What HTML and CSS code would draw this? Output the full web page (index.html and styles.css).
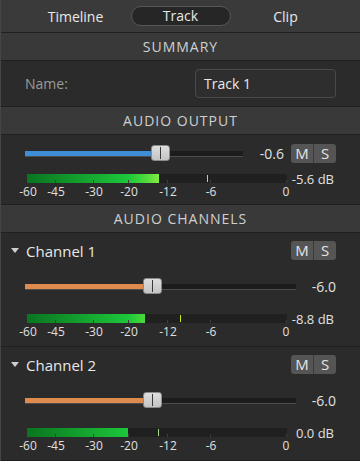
FILE: index.html
```html
<!DOCTYPE html>
<html lang="en">
<head>
    <meta charset="UTF-8">
    <meta name="viewport" content="width=device-width, initial-scale=1.0">
    <title>Track Properties</title>
    <link rel="stylesheet" href="styles.css">
</head>
<body>
    <div class="panel">
        <div class="tabs">
            <div class="tab">Timeline</div>
            <div class="tab"><span class="pill">Track</span></div>
            <div class="tab">Clip</div>
        </div>

        <div class="section-title">SUMMARY</div>
        <div class="name-row">
            <span class="label">Name:</span>
            <div class="name-input">Track 1</div>
        </div>

        <div class="section-title">AUDIO OUTPUT</div>
        <div class="output">
            <div class="slider-row">
                <div class="slider output-slider">
                    <div class="fill blue" style="width: 130px"></div>
                    <div class="thumb" style="left: 126px"></div>
                </div>
                <span class="value small-gap">-0.6</span>
                <div class="ms"><span>M</span><span>S</span></div>
            </div>
            <div class="meter-row">
                <div class="meter">
                    <div class="level" style="width: 132px"></div>
                    <i class="tick" style="left: 28px"></i>
                    <i class="tick" style="left: 66px"></i>
                    <i class="tick" style="left: 101px"></i>
                    <i class="tick" style="left: 140px"></i>
                    <i class="tick" style="left: 183px"></i>
                    <i class="tick" style="left: 259px"></i>
                    <i class="peak yellow" style="left: 180px"></i>
                </div>
                <span class="db">-5.6 dB</span>
            </div>
            <div class="scale">
                <span style="left: 1px">-60</span>
                <span style="left: 29px">-45</span>
                <span style="left: 67px">-30</span>
                <span style="left: 102px">-20</span>
                <span style="left: 141px">-12</span>
                <span style="left: 184px">-6</span>
                <span style="left: 259px">0</span>
            </div>
        </div>

        <div class="section-title">AUDIO CHANNELS</div>
        <div class="channel">
            <div class="channel-head">
                <span class="arrow"></span>
                <span class="channel-name">Channel 1</span>
                <div class="ms"><span>M</span><span>S</span></div>
            </div>
            <div class="slider-row">
                <div class="slider channel-slider">
                    <div class="fill orange" style="width: 122px"></div>
                    <div class="thumb" style="left: 118px"></div>
                </div>
                <span class="value">-6.0</span>
            </div>
            <div class="meter-row">
                <div class="meter">
                    <div class="level" style="width: 118px"></div>
                    <i class="tick" style="left: 28px"></i>
                    <i class="tick" style="left: 66px"></i>
                    <i class="tick" style="left: 101px"></i>
                    <i class="tick" style="left: 140px"></i>
                    <i class="tick" style="left: 183px"></i>
                    <i class="tick" style="left: 259px"></i>
                    <i class="peak lime" style="left: 153px"></i>
                </div>
                <span class="db">-8.8 dB</span>
            </div>
            <div class="scale">
                <span style="left: 1px">-60</span>
                <span style="left: 29px">-45</span>
                <span style="left: 67px">-30</span>
                <span style="left: 102px">-20</span>
                <span style="left: 141px">-12</span>
                <span style="left: 184px">-6</span>
                <span style="left: 259px">0</span>
            </div>
        </div>

        <div class="channel">
            <div class="channel-head">
                <span class="arrow"></span>
                <span class="channel-name">Channel 2</span>
                <div class="ms"><span>M</span><span>S</span></div>
            </div>
            <div class="slider-row">
                <div class="slider channel-slider">
                    <div class="fill orange" style="width: 122px"></div>
                    <div class="thumb" style="left: 118px"></div>
                </div>
                <span class="value">-6.0</span>
            </div>
            <div class="meter-row">
                <div class="meter">
                    <div class="level" style="width: 101px"></div>
                    <i class="tick" style="left: 28px"></i>
                    <i class="tick" style="left: 66px"></i>
                    <i class="tick" style="left: 101px"></i>
                    <i class="tick" style="left: 140px"></i>
                    <i class="tick" style="left: 183px"></i>
                    <i class="tick" style="left: 259px"></i>
                    <i class="peak pale" style="left: 131px"></i>
                </div>
                <span class="db">0.0 dB</span>
            </div>
            <div class="scale">
                <span style="left: 1px">-60</span>
                <span style="left: 29px">-45</span>
                <span style="left: 67px">-30</span>
                <span style="left: 102px">-20</span>
                <span style="left: 141px">-12</span>
                <span style="left: 184px">-6</span>
                <span style="left: 259px">0</span>
            </div>
        </div>
    </div>
</body>
</html>
```

FILE: styles.css
```css
body {
    margin: 0;
    background: #2b2b2b;
    font-family: 'Open Sans', 'Noto Sans', sans-serif;
    color: #dcdcdc;
    overflow: hidden;
}

.panel {
    width: 359px;
    height: 461px;
    border-left: 1px solid #454545;
    background: #2b2b2b;
}

/* top switcher */
.tabs {
    display: flex;
    height: 33px;
    padding: 0 22px;
    background: #3a3a3a;
    border-bottom: 1px solid #1f1f1f;
    box-sizing: border-box;
}

.tab {
    flex: 1;
    display: flex;
    align-items: center;
    justify-content: center;
    font-size: 14px;
    color: #e8e8e8;
}

.pill {
    width: 100px;
    height: 20px;
    line-height: 18px;
    text-align: center;
    box-sizing: border-box;
    border: 1px solid #575757;
    border-radius: 10px;
    background: #262626;
}

.section-title {
    height: 27px;
    line-height: 27px;
    text-align: center;
    font-size: 14px;
    letter-spacing: 1px;
    color: #d0d0d0;
    background: #393939;
    border-bottom: 1px solid #1f1f1f;
}

.name-row {
    display: flex;
    align-items: center;
    justify-content: space-between;
    height: 45px;
    padding: 0 24px 0 24px;
    border-bottom: 1px solid #1f1f1f;
}

.label {
    font-size: 14px;
    color: #9a9a9a;
}

.name-input {
    width: 141px;
    height: 29px;
    line-height: 27px;
    box-sizing: border-box;
    padding-left: 8px;
    font-size: 14px;
    color: #e8e8e8;
    border: 1px solid #4a4a4a;
    border-radius: 4px;
    background: #2e2e2e;
}

/* sliders */
.output {
    height: 70px;
    padding-top: 9px;
    box-sizing: border-box;
    border-bottom: 1px solid #1f1f1f;
}

.channel {
    height: 114px;
    padding-top: 8px;
    box-sizing: border-box;
    border-bottom: 1px solid #1f1f1f;
}

.slider-row {
    display: flex;
    align-items: center;
    height: 19px;
    padding: 0 24px;
}

.slider {
    position: relative;
    height: 5px;
    background: #1c1c1c;
    border-bottom: 1px solid #4d4d4d;
}

.output-slider { width: 218px; }
.channel-slider { width: 271px; }

.fill {
    height: 5px;
}

.blue { background: #3d8ed6; }
.orange { background: #df8a4e; }

.thumb {
    position: absolute;
    top: -6px;
    width: 19px;
    height: 16px;
    box-sizing: border-box;
    border-radius: 3px;
    background: linear-gradient(#dedede, #c4c4c4);
    border: 1px solid #8a8a8a;
}

.thumb::after {
    content: "";
    position: absolute;
    left: 8px;
    top: 1px;
    width: 1px;
    height: 12px;
    background: #3a3a3a;
}

.value {
    margin-left: auto;
    font-size: 14px;
    color: #e0e0e0;
}

.small-gap {
    margin-right: 7px;
}

.ms {
    display: flex;
    height: 19px;
    border-radius: 3px;
    overflow: hidden;
    background: #555;
}

.ms span {
    width: 22px;
    text-align: center;
    line-height: 19px;
    font-size: 15px;
    color: #e4e4e4;
}

.ms span + span {
    border-left: 1px solid #3a3a3a;
}

/* meters */
.meter-row {
    display: flex;
    align-items: center;
    margin-top: 11px;
    padding: 0 26px 0 26px;
    height: 9px;
}

.channel .meter-row { margin-top: 18px; }

.meter {
    position: relative;
    width: 260px;
    height: 9px;
    background: #202020;
}

.level {
    height: 9px;
    background: linear-gradient(to right, #0a7420, #1cc83a 39%, #48d83a 45%, #85ec42 51%, #d0f040);
    background-size: 260px 100%;
}

.tick {
    position: absolute;
    bottom: 0;
    width: 1px;
    height: 3px;
    background: #3d3d3d;
}

.peak {
    position: absolute;
    top: 1px;
    width: 1px;
    height: 7px;
}

.yellow { background: #e8d400; }
.lime { background: #c9e81c; }
.pale { background: #a8d890; }

.db {
    margin-left: auto;
    font-size: 13px;
    color: #e0e0e0;
}

.scale {
    position: relative;
    height: 17px;
    margin-left: 26px;
    font-size: 12px;
    color: #e0e0e0;
}

.scale span {
    position: absolute;
    top: 0;
    transform: translateX(-50%);
}

.channel-head {
    display: flex;
    align-items: center;
    height: 19px;
    padding: 0 24px 0 10px;
}

.arrow {
    width: 0;
    height: 0;
    border-left: 4px solid transparent;
    border-right: 4px solid transparent;
    border-top: 5px solid #cfcfcf;
    margin-right: 7px;
}

.channel-name {
    font-size: 15px;
    color: #e8e8e8;
    flex: 1;
}

.channel .slider-row {
    margin-top: 17px;
}
```
